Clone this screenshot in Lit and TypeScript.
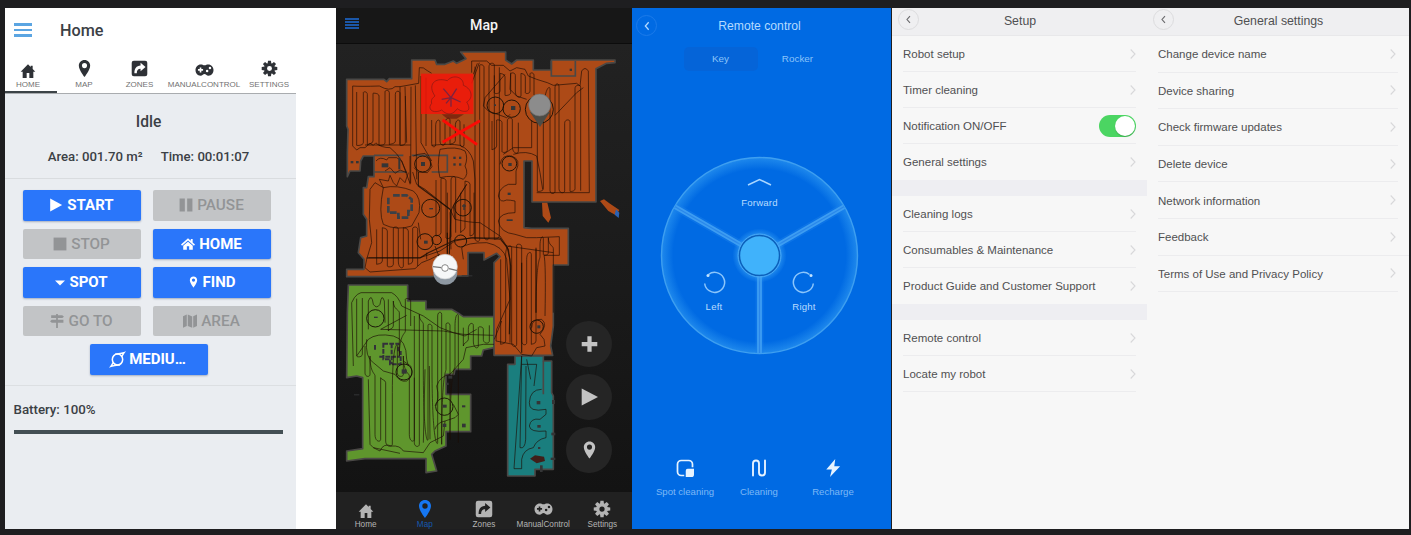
import { LitElement, html, svg, css } from "lit";
import { customElement, property } from "lit/decorators.js";

type Lane = [number, number, number];

/** Back-and-forth track through vertical lanes, with rounded turns. */
function sweep(lanes: Lane[]): string {
  let d = "";
  lanes.forEach(([x, top, bottom], i) => {
    const down = i % 2 === 0;
    const a = down ? top : bottom;
    const b = down ? bottom : top;
    if (i === 0) d += `M${x} ${a}`;
    else {
      const px = lanes[i - 1][0];
      const bulge = down ? -9 : 9;
      d += `C${px} ${a + bulge} ${x} ${a + bulge} ${x} ${a}`;
    }
    d += `L${x} ${b}`;
  });
  return d;
}

/** Lanes at the given x positions; tops and bottoms repeat when the lists are shorter. */
function lanes(xs: number[], tops: number[], bottoms: number[]): Lane[] {
  return xs.map((x, i): Lane => [x, tops[i % tops.length], bottoms[i % bottoms.length]]);
}

const GEAR = svg`
  <circle cx="12" cy="12" r="5.6" fill="none" stroke="currentColor" stroke-width="4.2"/>
  ${[0, 45, 90, 135, 180, 225, 270, 315].map(
    (a) => svg`<path d="M9.9 1h4.2l.6 4.5H9.3z" fill="currentColor" transform=${`rotate(${a} 12 12)`}/>`
  )}`;

const ICONS: Record<string, unknown> = {
  house: svg`<path fill="currentColor" d="M12 2 1 13h3v9.500h6V15h4v7.500h6V13h3l-4-4V4h-3v2z"/>`,
  pin: svg`<path fill="currentColor" fill-rule="evenodd" d="M12 0C7.400 0 4 3.500 4 8c0 6 8 16 8 16s8-10 8-16c0-4.500-3.400-8-8-8zm0 11.500a3.600 3.600 0 1 1 0-7.200 3.600 3.600 0 0 1 0 7.200z"/>`,
  share: svg`<path fill="currentColor" fill-rule="evenodd" d="M4 1h16a3 3 0 0 1 3 3v16a3 3 0 0 1-3 3H4a3 3 0 0 1-3-3V4a3 3 0 0 1 3-3zm9.500 3v3.600C7.500 8 4.800 11.500 4.800 18.800h3.400c0-4.600 1.500-6.400 5.300-6.600V16L20.500 10z"/>`,
  pad: svg`<path fill="currentColor" fill-rule="evenodd" d="M7 4.500c3 0 3.200 1 5 1s2-1 5-1c4 0 7 3.300 7 7.500s-2.800 7.500-6.600 7.500c-3 0-3.600-2.300-5.400-2.300S9.600 19.500 6.600 19.500C2.800 19.500 0 16.200 0 12s3-7.500 7-7.500zM5.600 8.500v2.300H3.300v2.200h2.300v2.300h2.200V13h2.300v-2.200H7.800V8.500zM15.500 11.500a1.700 1.700 0 1 0 0 3.400 1.700 1.700 0 0 0 0-3.400zm3.800-3.800a1.700 1.700 0 1 0 0 3.400 1.700 1.700 0 0 0 0-3.400z"/>`,
  gear: GEAR,
  play: svg`<path fill="currentColor" d="M2 1v22l20.500-11z"/>`,
  pause: svg`<path fill="currentColor" d="M1 1h9v22H1zM14 1h9v22h-9z"/>`,
  stop: svg`<path fill="currentColor" d="M1 1h22v22H1z"/>`,
  home: svg`<path fill="currentColor" d="M12 2 0 13l1.800 2L12 6l10.200 9 1.800-2-4-3.700V3.500h-3.200v2.900zM12 8l-8.200 7.200V22H10v-6h4v6h6.200v-6.800z"/>`,
  caret: svg`<path fill="currentColor" d="M0 7h24L12 19z"/>`,
  signs: svg`<path fill="currentColor" d="M10.500 0h3v2H21l3 2.500L21 7h-7.500v3H23v5h-9.500v9h-3v-9H3l-3-2.500L3 10h7.500V7H2V2h8.500z"/>`,
  map: svg`<path fill="currentColor" d="M0 4 6.500 1v19.500L0 23.500zM8.200 1l7.600 3.200v19.300L8.200 20.500zM17.500 4 24 1v19.500l-6.500 3z"/>`,
  turbo: svg`<g fill="none" stroke="currentColor" stroke-width="2.400"><ellipse cx="12" cy="12" rx="8.300" ry="8.800"/><path d="M8 3.500C13 3 18 2.500 22.500 1 21 3 20 5.500 19 7M16 20.500c-5 .5-10 1-14.500 2.500C3 21 4 18.500 5 17"/></g>`,
  plus: svg`<path fill="currentColor" d="M9 1h6v8h8v6h-8v8H9v-8H1V9h8z"/>`,
  arrow: svg`<path fill="currentColor" d="M1 0v24l23-12z"/>`,
  spot: svg`<path fill="none" stroke="currentColor" stroke-width="2.300" d="M11 22H7a5 5 0 0 1-5-5V7a5 5 0 0 1 5-5h10a5 5 0 0 1 5 5v4"/><path fill="currentColor" d="M15.500 13H24v7.500a3.500 3.500 0 0 1-3.500 3.500H13v-8.500a2.500 2.500 0 0 1 2.500-2.500z"/>`,
  wave: svg`<path fill="none" stroke="currentColor" stroke-width="2.500" stroke-linecap="round" d="M4 22V6a4 4 0 0 1 8 0v12a4 4 0 0 0 8 0V2"/>`,
  bolt: svg`<path fill="currentColor" d="m15 0-12 14h7.500L8 24 21.500 9.500h-7.800z"/>`,
  back: svg`<path fill="none" stroke="currentColor" stroke-width="3" d="M16 3 8 12l8 9"/>`,
};

@customElement("ui-icon")
class UiIcon extends LitElement {
  @property() name = "";
  static styles = css`
    :host { display: block; flex: none; width: 16px; height: 16px; }
    svg { display: block; width: 100%; height: 100%; overflow: visible; }
  `;
  render() {
    return html`<svg viewBox="0 0 24 24" aria-hidden="true">${ICONS[this.name]}</svg>`;
  }
}

@customElement("home-screen")
class HomeScreen extends LitElement {
  static styles = css`
    :host { display: block; background: #fff; color: #3b4045; font-family: Roboto, sans-serif; font-weight: 500; }
    .top { display: flex; align-items: center; height: 44px; padding-left: 8.500px; }
    .burger { display: grid; gap: 3px; width: 18px; margin-right: 28.500px; }
    .burger i { height: 2.5px; background: #5ba5e2; }
    h1 { margin: 0; font-size: 16.2px; font-weight: 500; }
    .tabs { display: flex; height: 39px; padding-left: 0.500px; }
    .tab { display: flex; flex-direction: column; align-items: center; justify-content: flex-end; padding-bottom: 1px; box-sizing: border-box; gap: 3px; font: 8px/10px "Liberation Sans", sans-serif; color: #717171; }
    .tab ui-icon { color: #2e3136; width: 17px; height: 17px; }
    .tab ui-icon.house { height: 16px; width: 16px; margin-bottom: -2px; }
    .tab ui-icon.pad { width: 21px; height: 18px; margin-bottom: -2px; }
    .line { width: 291px; height: 2px; border-bottom: 1px solid #a9acaf; margin-bottom: -1px; position: relative; }
    .line i { display: block; width: 52px; height: 2px; background: #3c4347; }
    .body { width: 291px; height: 436px; background: #eaedf1; }
    .status { height: 85px; border-bottom: 1px solid #d9dcdf; display: flex; flex-direction: column; align-items: center; }
    .idle { font-size: 15.600px; line-height: 20px; margin-top: 19px; padding-right: 4px; }
    .nums { display: flex; gap: 18px; font-size: 13.200px; line-height: 18px; margin-top: 16px; padding-right: 4px; }
    .grid { display: grid; grid-template-columns: 118px 118px; gap: 8px 12px; padding: 11px 0 0 18px; height: 195px; grid-auto-rows: 30.500px; }
    .btn { display: flex; align-items: center; justify-content: center; gap: 4px; border-radius: 2px; background: #2a76fa; color: #fff; font-size: 15px; font-weight: 700; box-shadow: 0 1px 2px rgba(60, 80, 120, 0.4); padding-right: 1px; box-sizing: border-box; }
    .btn.off { background: #c2c4c6; color: #929496; font-weight: 500; font-size: 15.300px; box-shadow: none; }
    .btn ui-icon { width: 14px; height: 14px; }
    .btn ui-icon.caret { width: 10px; height: 11px; }
    .btn ui-icon.pin { width: 11px; }
    .btn ui-icon.turbo { width: 15px; height: 15px; }
    .wide { grid-column: 1 / 3; justify-self: center; width: 118px; position: relative; left: 1.500px; }
    .battery { border-top: 1px solid #dcdfe2; padding: 15px 13px 0 8.500px; font-size: 13.300px; line-height: 18px; }
    .bar { height: 4px; margin-top: 11px; background: #434f54; }
  `;
  render() {
    const tabs: [string, string, number][] = [
      ["house", "HOME", 45], ["pin", "MAP", 67], ["share", "ZONES", 44], ["pad", "MANUALCONTROL", 85], ["gear", "SETTINGS", 45],
    ];
    const buttons: [string, string, boolean][] = [
      ["play", "START", true], ["pause", "PAUSE", false], ["stop", "STOP", false], ["home", "HOME", true],
      ["caret", "SPOT", true], ["pin", "FIND", true], ["signs", "GO TO", false], ["map", "AREA", false],
    ];
    return html`
      <div class="top"><div class="burger"><i></i><i></i><i></i></div><h1>Home</h1></div>
      <div class="tabs">
        ${tabs.map(([i, t, w]) => html`<div class="tab" style="width:${w}px"><ui-icon class=${i} name=${i}></ui-icon><span>${t}</span></div>`)}
      </div>
      <div class="line"><i></i></div>
      <div class="body">
        <div class="status">
          <div class="idle">Idle</div>
          <div class="nums"><span>Area: 001.70 m²</span><span>Time: 00:01:07</span></div>
        </div>
        <div class="grid">
          ${buttons.map(([i, t, on]) => html`<div class="btn ${on ? "" : "off"}"><ui-icon class=${i} name=${i}></ui-icon>${t}</div>`)}
          <div class="btn wide"><ui-icon class="turbo" name="turbo"></ui-icon>MEDIU…</div>
        </div>
        <div class="battery">Battery: 100%<div class="bar"></div></div>
      </div>`;
  }
}

/* Floor plan, in units of a third of a pixel from the plan's own corner. */
const ORANGE =
  "M20 100H132L140 107 148 98H215V42H285L290 55 315 55 340 45 350 52 378 38 362 18H497V42L515 54 530 42H580V72H634V42H825V50L800 52 768 68V468H576V345H552V545L575 547H685V657H640V840L632 900 638 928H462V650L480 632 470 622 432 642V620H384V690H300L270 692H20V670H72V640L55 620 62 575 80 570V520L70 505V425H80L85 392H102V330H70L62 345 60 375H30L22 392V320L24 250 20 240Z";
const GREEN =
  "M25 717H203V765H258V790H335L360 805 370 812H462V905L430 912 425 930H392V970H345L342 985H318V1045H392V1157H318V1200L285 1215 275 1225 290 1275 258 1280V1238H75L20 1245V1215L68 1208V995L50 990 20 995 22 800Z";
const TEAL = "M525 930H610V945H635V1040L640 1050V1270H585V1290H503V955H525Z";

const TRACKS = [
  // upper left bay
  sweep(lanes([50, 70, 82, 99, 117, 135, 148, 166, 180, 196], [138, 140, 145, 142, 150], [298, 290, 296, 285])),
  "M38 300V120Q60 122 118 120 150 138 165 122L180 122 236 112 238 65Q250 62 262 74L275 82",
  "M38 300 50 312 60 305 75 305 90 292 100 298 108 290M75 297H212M108 292Q125 305 150 305 172 322 185 345L210 412",
  "M180 122V295M195 122 200 290M213 122 212 412M226 118 230 400M243 90V290L275 345M258 95V300",
  // core of the room
  sweep(lanes([405, 419, 432, 447, 463, 478], [62, 58, 64], [575, 580, 570])),
  "M395 80V45H440L455 58H490L510 75 530 65 555 70 565 90 590 100 622 110 640 118 710 112 720 120 725 75Q735 60 745 75L748 440H590",
  "M418 50 395 112M400 85 412 52M495 85 435 155 430 180 445 195 500 215 510 205M512 80 510 130 530 150 560 160",
  sweep(lanes([463, 480, 495, 512, 526, 543, 556, 570, 582], [88, 82, 92, 84], [140, 135, 148])),
  sweep(lanes([456, 470, 486, 502, 517, 535], [225, 222, 230], [312, 300, 316])),
  sweep(lanes([592, 610, 630, 645, 657, 674, 690, 705, 722], [232, 228, 128, 124, 120], [436, 428, 434])),
  "M575 225 575 305 520 305 490 325M730 125 710 140 645 208M608 430 600 380 590 330Q560 312 520 325",
  sweep(lanes([275, 287, 300, 315, 330, 346, 360, 372], [222, 240, 228, 235], [292, 296, 284])),
  "M275 298Q330 292 360 298 390 310 400 345L405 400V580",
  // table and chairs
  "M300 310Q350 300 375 315 385 335 375 360 388 385 370 400 340 385 300 395 290 360 300 310M108 345Q120 330 140 342L145 335 170 335 185 345 200 380 180 372 165 382 150 365 135 375M220 330 235 325 255 322 270 340 276 362 262 380 235 378 222 365",
  "M210 330V415M218 378 230 415 255 430 330 490 345 520 340 480 380 415 345 470M130 425 118 400 145 405 150 388 160 410 170 420 180 395 195 410 205 380",
  // lower left bay
  "M130 425Q170 415 220 435 245 455 237 500L215 540Q170 555 130 535 115 500 130 425",
  "M130 425 105 410 90 430 88 520 95 590 80 640 75 665 90 678 225 668 245 650 270 640 300 625",
  sweep(lanes([110, 127, 142, 160, 175, 190, 205, 218, 233], [550, 545, 555, 548], [655, 645, 660])),
  "M85 635H240L300 615 345 585 395 575 480 580 500 600 640 620M235 530 242 580",
  sweep(lanes([288, 303, 318, 333, 347], [402, 398, 405], [570, 560, 575])),
  sweep(lanes([362, 375, 390, 402], [440, 405, 415], [560, 545, 570])),
  "M345 520Q390 530 420 530L480 570 500 600 510 640 510 890M260 620V640M345 470 330 500 333 610M322 440V620",
  "M300 640 285 600M370 640 365 605Q380 590 440 590 490 600 500 640L510 760 470 850 468 885 520 895 545 925 575 930 590 905",
  // bays along the inner wall
  "M480 355Q485 325 515 330 545 340 528 375L528 415H505Q478 425 475 450 480 472 500 462 510 462 525 465V500Q480 500 475 525 480 560 525 565L560 575 590 575 658 572V628H612Q618 650 615 810",
  // corridor
  sweep(lanes([482, 497, 515, 530, 545, 560, 574, 588], [640, 625, 605, 598, 602], [895, 885, 890])),
  sweep(lanes([588, 600, 610, 625, 640], [608, 600, 578, 575], [800, 632, 625, 620])),
  "M575 845Q575 818 605 820 625 835 600 865L612 880 615 900 590 905",
  // green room
  sweep(lanes([50, 67], [758, 756], [930, 925])),
  "M40 960 35 770Q50 735 75 740H155Q175 750 185 780L250 810 300 845 340 860 375 870 410 850M85 850V765Q95 740 100 775 110 790 120 775 125 740 133 765L135 830",
  sweep(lanes([145, 160, 178, 196, 212], [760, 765, 800], [855, 840, 930])),
  sweep(lanes([223, 238, 250, 264, 276, 293, 305, 318, 330, 345, 355], [810, 805, 835, 838, 842], [1190, 1195, 970, 1180, 960])),
  sweep(lanes([370, 385, 400, 415, 430, 448], [845, 850, 838], [900, 880, 885])),
  "M122 850 200 808M122 850 310 855 370 865 460 868M463 880 485 825M50 930 85 880Q110 860 160 870 200 880 200 940L205 960",
  "M80 880Q75 935 100 950L130 975 165 985Q180 1010 200 1005 225 990 212 960L190 945",
  sweep(lanes([75, 90, 105, 122, 137, 157, 172, 190, 208, 223], [900, 930, 990, 995, 1010, 1040], [980, 985, 1165, 1180, 1185, 1195])),
  "M85 1000 90 1195 100 1205 120 1215Q130 1190 155 1200 180 1198 190 1215L250 1220 270 1190 310 1170 315 1125Q290 1130 285 1150M100 1205 180 1222",
  "M315 1125 345 1115 355 1105M355 1105 340 1075M285 1080Q300 1060 290 1020 300 990 330 985L370 940 378 905 430 895 462 895M255 970 250 1190M268 960 270 1180",
  // teal strip
  "M545 930 522 1268H545V1240Q550 1210 580 1205 590 1180 618 1175V1155Q570 1160 568 1140 572 1115 600 1120L618 1105V1090Q565 1100 568 1070 570 1030 605 1030M545 930 540 1205Q555 1210 557 1180L558 960M560 940 572 1000M545 955H590L582 1020",
];

const RINGS: [number, number, number][] = [
  [466, 178, 25], [515, 188, 26], [598, 190, 42], [272, 487, 27], [369, 485, 25], [255, 587, 24], [362, 585, 18], [290, 582, 14],
  [248, 354, 24], [508, 353, 22], [106, 817, 26], [192, 978, 24], [313, 1082, 26], [590, 842, 20],
];

const SPECKS: [number, number, number, number][] = [
  [462, 175, 6, 5], [513, 180, 13, 12], [268, 486, 11, 4], [366, 478, 12, 4], [370, 474, 4, 18], [102, 812, 11, 4], [185, 970, 15, 13],
  [308, 1076, 12, 9], [308, 1133, 11, 10], [366, 1133, 11, 11], [366, 1078, 10, 6], [590, 1065, 11, 10], [592, 1137, 10, 8], [594, 1203, 7, 6],
  [32, 345, 8, 7], [48, 345, 8, 7], [340, 332, 7, 7], [357, 332, 7, 7], [340, 352, 7, 7], [357, 352, 7, 7], [505, 351, 10, 9],
  [503, 440, 9, 7], [500, 520, 18, 5], [252, 584, 11, 9], [125, 352, 20, 12], [175, 335, 6, 35], [243, 348, 12, 12], [689, 68, 7, 7],
  [636, 1062, 9, 12], [634, 1160, 12, 8], [632, 1235, 14, 7], [365, 688, 32, 3], [592, 838, 9, 9],
  [325, 990, 12, 8], [318, 1010, 8, 7], [600, 1258, 8, 20], [42, 1045, 16, 3],
];

@customElement("map-screen")
class MapScreen extends LitElement {
  static styles = css`
    :host { display: grid; grid-template-rows: 36px 448px 37px; background: #171717; font-family: "Liberation Sans", sans-serif; }
    .top { display: grid; grid-template-columns: 28px 1fr 28px; align-items: center; border-bottom: 1px solid #0c0c0c; }
    .burger { display: grid; gap: 1px; margin: -4px 0 0 9px; width: 14px; }
    .burger i { height: 2px; background: #1b57a8; }
    h1 { margin: -2px 0 0; text-align: center; color: #f4f4f4; font: 500 14.200px Roboto, sans-serif; }
    .canvas { position: relative; background: linear-gradient(#222 0%, #1a1a1a 55%, #131313 100%); }
    .canvas > svg { display: block; width: 296px; height: 448px; }
    .fabs { position: absolute; right: 20px; top: 276.500px; display: grid; gap: 7px; }
    .fab { width: 46px; height: 46px; border-radius: 50%; background: #252525; color: #c3c3c3; display: grid; place-items: center; }
    .fab ui-icon { width: 17px; height: 18px; }
    .tabs { display: grid; grid-template-columns: repeat(5, 1fr); background: #212121; color: #b4b4b4; font-size: 8.200px; line-height: 10px; }
    .tab { display: flex; flex-direction: column; align-items: center; justify-content: flex-end; }
    .tab.on { color: #1677f2; }
    .tab.on span { color: #1558ae; }
    .tab span { margin-bottom: -1px; }
    .tab ui-icon { width: 18px; height: 18px; margin-bottom: 2px; }
    .tab ui-icon.house { width: 16px; height: 16px; margin-bottom: 1px; }
    .tab ui-icon.pad { width: 21px; height: 18px; }
  `;
  render() {
    const tabs: [string, string][] = [
      ["house", "Home"], ["pin", "Map"], ["share", "Zones"], ["pad", "ManualControl"], ["gear", "Settings"],
    ];
    return html`
      <div class="top"><div class="burger"><i></i><i></i><i></i><i></i></div><h1>Map</h1></div>
      <div class="canvas">
        <svg viewBox="-12 -6 888 1344">
          <g stroke="#4a4846" stroke-width="5" stroke-linejoin="round">
            <path fill="#5f962d" d=${GREEN} />
            <path fill="#1a7e7e" d=${TEAL} />
            <path fill="#ad4a17" d=${ORANGE} />
          </g>
          <path fill="#ad4a17" d="M606 470H622L633 515 625 530 608 510ZM780 465 792 460 808 472 838 492 828 508 805 495Z" />
          <path fill="#2a62b4" d="M828 490 838 500 836 516 824 506Z" />
          <path fill="none" stroke="#4a4846" stroke-width="5" d="M634 45V90H706V45M102 328H190M102 378H200M215 328H322V378H275M610 945V1045" />
          <path fill="none" stroke="#3b4046" stroke-width="8" stroke-dasharray="20 5" d="M145 455V500H175V515H205V495H215V460L200 448H155" />
          <path fill="none" stroke="#33303a" stroke-width="6" stroke-dasharray="14 4" d="M130 893H175V918H182V955H150V940H130ZM155 893V955M105 897V915M118 932H180" />
          <path fill="none" stroke="#1c0d04" stroke-opacity=".78" stroke-width="2.500" stroke-linejoin="round" d=${TRACKS.join("")} />
          <path fill="none" stroke="#150c05" stroke-opacity=".8" stroke-width="3.500" stroke-linejoin="round" d="M80 636H240L265 620 345 582 395 576H480L505 610 512 660 508 865M333 490 328 625M322 560V625M235 378V420L330 490M545 920V650" />
          <g fill="none" stroke="#191006" stroke-width="2.800">
            ${RINGS.map(([x, y, r]) => svg`<circle cx=${x} cy=${y} r=${r} />`)}
          </g>
          <g fill="#343536">${SPECKS.map(([x, y, w, h]) => svg`<rect x=${x} y=${y} width=${w} height=${h} />`)}</g>
          <path fill="#401f1a" d="M570 1238 585 1228 612 1232 615 1245 590 1252Z" />
          <rect x="243" y="83" width="157" height="121" fill="#f4140a" fill-opacity=".84" />
          <path fill="none" stroke="#8e1a14" stroke-opacity=".75" stroke-width="3" d="M285 150C262 118 282 92 322 104C338 84 372 92 370 118C400 130 398 160 380 168C400 200 370 202 352 188C335 212 318 205 305 192C280 205 260 190 275 172C272 160 278 156 285 150Z" />
          <path fill="none" stroke="#7c2340" stroke-width="4" d="M333 155 310 128M333 155 350 128M333 155 305 160M333 155 362 168M333 155V182M333 155 318 172" />
          <path fill="#6d190c" fill-opacity=".7" d="M305 205H372L350 218H322Z" />
          <path stroke="#fb0a05" stroke-width="8.500" d="M308 222 411 296M420 224 308 289" />
          <path fill="#4c4c46" d="M570 198 600 243 630 198Z" />
          <circle cx="599" cy="177" r="33" fill="#8c8c8c" stroke="#74706c" stroke-width="2" />
          <circle cx="316" cy="680" r="36" fill="#8e98a2" />
          <circle cx="315" cy="662" r="37" fill="#f6f7f8" stroke="#c6c9cb" stroke-width="2" />
          <path d="M279 662 304 665M327 668 352 674" stroke="#777" stroke-width="4" />
          <circle cx="315" cy="666" r="10" fill="#fff" stroke="#888" stroke-width="3" />
        </svg>
        <div class="fabs">
          ${["plus", "arrow", "pin"].map((i) => html`<div class="fab"><ui-icon name=${i}></ui-icon></div>`)}
        </div>
      </div>
      <div class="tabs">
        ${tabs.map(([i, t]) => html`<div class="tab ${i === "pin" ? "on" : ""}"><ui-icon class=${i} name=${i}></ui-icon><span>${t}</span></div>`)}
      </div>`;
  }
}

@customElement("remote-screen")
class RemoteScreen extends LitElement {
  static styles = css`
    :host { display: flex; flex-direction: column; background: #006ae3; color: #b4daff; font-family: "Liberation Sans", sans-serif; }
    .top { display: grid; grid-template-columns: 30px 1fr 38px; align-items: center; height: 35px; padding-left: 4px; }
    .back { display: grid; place-items: center; width: 19px; height: 19px; border: 1px solid #1c7bea; border-radius: 50%; }
    .back ui-icon { width: 10px; height: 10px; }
    h1 { margin: 0; text-align: center; font-size: 12.200px; font-weight: 400; }
    .modes { display: grid; grid-template-columns: 74px 74px; justify-content: center; gap: 3px; margin: 4px 0 0 -2px; font-size: 9.900px; line-height: 24px; text-align: center; color: #8cc4fa; padding-right: 3px; }
    .key { background: #0564d8; border-radius: 5px; }
    .dial { display: block; width: 204px; height: 204px; margin: 82px 0 0 25px; }
    .dial text { font-size: 9.600px; fill: #b9dcff; text-anchor: middle; letter-spacing: 0.2px; }
    .actions { display: grid; grid-template-columns: repeat(3, 74px); justify-content: center; margin-top: 102px; padding-right: 5px; }
    .action { display: flex; flex-direction: column; align-items: center; gap: 9px; font-size: 9.600px; line-height: 12px; color: #7db8f6; }
    .action ui-icon { width: 18px; height: 18px; color: #e6f3ff; }
  `;
  render() {
    return html`
      <div class="top"><div class="back"><ui-icon name="back"></ui-icon></div><h1>Remote control</h1></div>
      <div class="modes"><span class="key">Key</span><span>Rocker</span></div>
      <svg class="dial" viewBox="657 153 204 204">
        <defs>
          <radialGradient id="rim" gradientUnits="userSpaceOnUse" cx="759.500" cy="255.500" r="98">
            <stop offset=".88" stop-color="#3da7f6" stop-opacity="0" />
            <stop offset="1" stop-color="#3da7f6" stop-opacity=".5" />
          </radialGradient>
          <radialGradient id="halo" gradientUnits="userSpaceOnUse" cx="759.500" cy="255.500" r="27">
            <stop offset=".7" stop-color="#3da7f6" stop-opacity=".7" />
            <stop offset="1" stop-color="#3da7f6" stop-opacity="0" />
          </radialGradient>
        </defs>
        <circle cx="759.500" cy="255.500" r="98" fill="url(#rim)" stroke="#3e9ff0" stroke-width="1.400" />
        <g>
          ${[0, 120, 240].map(
            (a) => svg`<g transform=${`rotate(${a} 759.5 255.5)`}>
              <path d="M759.500 276V353" stroke="#1a80ec" stroke-width="8" opacity=".45" />
              <path d="M759.500 276V353" stroke="#3d9df2" stroke-width="4.800" />
              <path d="M759.500 276V353" stroke="#2a87ea" stroke-width="1.200" /></g>`
          )}
        </g>
        <circle cx="759.500" cy="255.500" r="27" fill="url(#halo)" />
        <circle cx="759.500" cy="255.500" r="20" fill="#40b2fb" stroke="#0c5fb9" stroke-width="1.400" />
        <circle cx="759.500" cy="255.500" r="21.500" fill="none" stroke="#4aa8f4" />
        <path d="M748 185 759.500 179.500 771 185" fill="none" stroke="#a9d6ff" stroke-width="1.500" />
        <g fill="none" stroke="#8cc6fb" stroke-width="1.500">
          <path d="M708.500 274.500A10 10 0 1 1 704.700 283.500" />
          <path d="M809.500 274.500A10 10 0 1 0 813.300 283.500" />
        </g>
        <circle cx="708" cy="275.500" r="1.500" fill="#c3e3ff" />
        <circle cx="811" cy="275.500" r="1.500" fill="#c3e3ff" />
        <text x="759.500" y="206">Forward</text>
        <text x="714" y="310.300">Left</text>
        <text x="804" y="310.300">Right</text>
      </svg>
      <div class="actions">
        <div class="action"><ui-icon name="spot"></ui-icon>Spot cleaning</div>
        <div class="action"><ui-icon name="wave"></ui-icon>Cleaning</div>
        <div class="action"><ui-icon name="bolt"></ui-icon>Recharge</div>
      </div>`;
  }
}

@customElement("list-screen")
class ListScreen extends LitElement {
  @property() heading = "";
  @property({ attribute: false }) groups: string[][] = [];
  @property({ type: Number }) rowHeight = 36;
  static styles = css`
    :host { display: block; background: #f7f7f7; color: #505052; font-family: "Liberation Sans", sans-serif; font-size: 11.500px; }
    .top { display: grid; grid-template-columns: 30px 1fr 33px; align-items: center; height: 28px; box-sizing: border-box; padding: 0 2px 4px 6px; background: #efeff1; border-bottom: 1px solid #e8e8ea; }
    .back { display: grid; place-items: center; width: 19px; height: 19px; border: 1px solid #dcdcde; border-radius: 50%; color: #6a6a6c; }
    .back ui-icon { width: 9px; height: 9px; }
    h1 { margin: 0; text-align: center; font-size: 12.300px; font-weight: 400; position: relative; top: 1px; }
    .group + .group { border-top: 16px solid #eeeef2; }
    .row { display: flex; align-items: center; justify-content: space-between; box-sizing: border-box; margin: 0 11px; border-bottom: 1px solid #ececee; }
    .group .row:last-child { border-bottom-color: transparent; }
    .group:last-child .row:last-child { border-bottom-color: #ececee; }
    .row.full { margin-right: 0; padding-right: 11px; }
    .row.full .chev, :host(.general) .chev { position: relative; left: -2px; }
    .row span:first-child { position: relative; top: 0.500px; }
    .chev { width: 6px; height: 10px; flex: none; }
    .toggle { width: 37px; height: 22px; border-radius: 11px; background: #4bd562; display: flex; justify-content: flex-end; box-sizing: border-box; padding: 1px; }
    .toggle i { width: 20px; height: 20px; border-radius: 50%; background: #fff; box-shadow: 0 1px 1px rgba(0, 0, 0, 0.2); }
  `;
  render() {
    return html`
      <div class="top"><div class="back"><ui-icon name="back"></ui-icon></div><h1>${this.heading}</h1></div>
      ${this.groups.map(
        (g) => html`<div class="group">
          ${g.map(
            (t) => html`<div class="row ${t === "Feedback" ? "full" : ""}" style="height:${this.rowHeight}px">
              <span>${t}</span>
              ${t.includes("ON/OFF")
                ? html`<span class="toggle"><i></i></span>`
                : html`<svg class="chev" viewBox="0 0 6 10"><path d="M.7.5 5 5 .7 9.500" fill="none" stroke="#d8d8da" stroke-width="1.100" /></svg>`}
            </div>`
          )}
        </div>`
      )}`;
  }
}

@customElement("app-root")
class AppRoot extends LitElement {
  static styles = css`
    :host { display: grid; grid-template-columns: 331px 296px 259px 255px 262px; grid-template-rows: 521px; width: 1411px; height: 535px; box-sizing: border-box; padding: 8px 0 0 5px; background: #1e1e20; overflow: hidden; }
    .setup { margin-left: 1px; margin-right: -1px; }
    .general { margin-left: 1px; margin-right: -1px; }
  `;
  render() {
    return html`
      <home-screen></home-screen>
      <map-screen></map-screen>
      <remote-screen></remote-screen>
      <list-screen class="setup" heading="Setup" .groups=${[
        ["Robot setup", "Timer cleaning", "Notification ON/OFF", "General settings"],
        ["Cleaning logs", "Consumables & Maintenance", "Product Guide and Customer Support"],
        ["Remote control", "Locate my robot"],
      ]}></list-screen>
      <list-screen class="general" heading="General settings" .rowHeight=${36.6} .groups=${[
        ["Change device name", "Device sharing", "Check firmware updates", "Delete device", "Network information", "Feedback", "Terms of Use and Privacy Policy"],
      ]}></list-screen>`;
  }
}
